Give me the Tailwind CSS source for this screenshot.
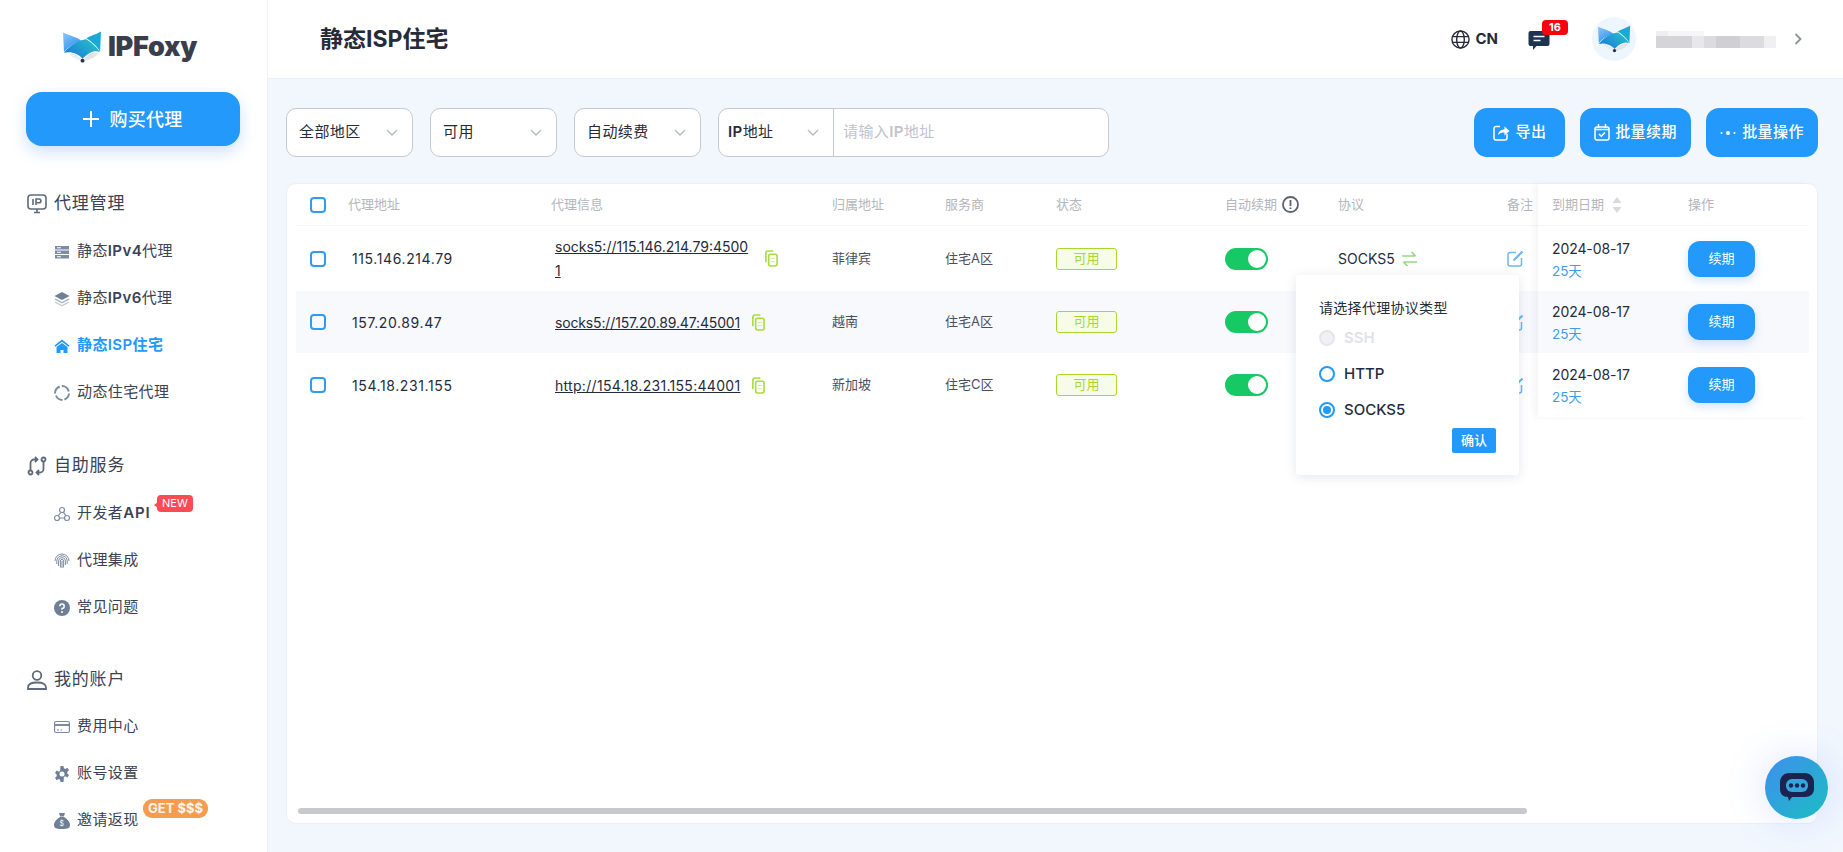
<!DOCTYPE html>
<html lang="zh-CN">
<head>
    <meta charset="UTF-8">
    <title>静态ISP住宅 - IPFoxy</title>
    <script src="https://cdn.jsdelivr.net/npm/@tailwindcss/browser@4"></script>
</head>
<body class="h-screen w-screen overflow-hidden flex bg-[#f2f7fe] text-[#262b3a] font-['Inter','Noto_Sans_CJK_SC',sans-serif]">

<svg width="0" height="0" class="absolute">
    <defs>
        <linearGradient id="earL" x1="0" y1="0" x2="0.6" y2="1"><stop offset="0" stop-color="#8cc8fb"/><stop offset="1" stop-color="#2f8fee"/></linearGradient>
        <linearGradient id="sweep" x1="0" y1="1" x2="1" y2="0.3"><stop offset="0" stop-color="#1b74dc"/><stop offset="1" stop-color="#27bcc9"/></linearGradient>
        <symbol id="logo" viewBox="0 0 40 32">
            <path d="M0 1C6 4 14 5 19 10C12 11 5 16 1 21Z" fill="url(#earL)"/>
            <path d="M39 0C34 3 28 4 24 7C30 11 36 16 38 21Z" fill="#1aa9d4"/>
            <path d="M1 22C8 13 16 9 24 8C30 12 35 17 38 21C32 19 27 21 20 28C16 23 8 20 1 22Z" fill="url(#sweep)"/>
            <path d="M21 29C26 23 32 20 37 22C34 26 28 30 21 30Z" fill="#dfe5e9"/>
            <path d="M19 29C15 24 10 22 6 23C9 26 14 29 19 30Z" fill="#e9eef2"/>
            <circle cx="20" cy="30" r="2" fill="#2b2f3f"/>
        </symbol>
        <symbol id="copy" viewBox="0 0 15 18" fill="none" stroke="#a8dc3c" stroke-width="1.700">
            <path d="M2 13V3a2 2 0 0 1 2-2h6"/>
            <rect x="5" y="4.500" width="9" height="12.500" rx="2"/>
            <path d="M7.500 9h4M7.500 12.500h4" stroke-width="1" stroke="#cde88d"/>
        </symbol>
    </defs>
</svg>

<aside class="w-[268px] shrink-0 h-full bg-white border-r border-[#edf0f5] flex flex-col">
    <div class="h-[92px] pt-[31px] pl-[63px] flex items-start gap-[6px]">
        <svg class="w-[39px] h-[32px]"><use href="#logo"/></svg>
        <span class="text-[27px] leading-[32px] font-black text-[#3a3d4c] tracking-[-0.3px]">IPFoxy</span>
    </div>
    <div class="ml-[26px] w-[214px] h-[54px] rounded-[16px] bg-[#2299fb] shadow-[0_6px_16px_rgba(34,120,251,0.22)] flex items-center justify-center gap-[10px] text-white text-[18px]">
        <svg class="w-[16px] h-[16px]" viewBox="0 0 16 16" fill="none" stroke="white" stroke-width="2"><path d="M8 0v16M0 8h16"/></svg>
        <span class="font-medium tracking-[0.3px]">购买代理</span>
    </div>

    <div class="mt-[45px] pl-[27px] flex items-center gap-[7px] h-[26px] text-[17px] tracking-[0.8px] text-[#3a4254]">
        <svg class="w-[20px] h-[20px]" viewBox="0 0 20 20" fill="none" stroke="#5f6b7c" stroke-width="1.600"><rect x="1" y="1" width="18" height="14" rx="3"/><path d="M7 18.500h6M10 15v3.500M6 5v6M9 11V5h3a1.700 1.700 0 0 1 0 3.800H9"/></svg>
        <span>代理管理</span>
    </div>
    <nav class="mt-[11px] pl-[54px] flex flex-col text-[15px] tracking-[0.4px] text-[#3a4254]">
        <div class="h-[47px] flex items-center gap-[7px]">
            <svg class="w-[16px] h-[16px]" viewBox="0 0 16 16" fill="#7d8ba0"><path d="M1 2h14v3.500H1zM1 6.500h14V10H1zM1 11h14v3.500H1z"/><path d="M3 3.200h4v1H3zM3 7.700h4v1H3zM3 12.200h4v1H3z" fill="#fff"/></svg>
            <span>静态<b class="font-semibold">IPv4</b>代理</span>
        </div>
        <div class="h-[47px] flex items-center gap-[7px]">
            <svg class="w-[16px] h-[16px]" viewBox="0 0 16 16"><path d="M8 1l7.500 4L8 9 .500 5z" fill="#6f7f95"/><path d="M1.500 7.500L8 11l6.500-3.500 1 1L8 12.500.500 8.500z" fill="#a9b4c2"/><path d="M1.500 10.500L8 14l6.500-3.500 1 1L8 15.500.500 11.500z" fill="#c4ccd6"/></svg>
            <span>静态<b class="font-semibold">IPv6</b>代理</span>
        </div>
        <div class="h-[47px] flex items-center gap-[7px] text-[#2299fb] font-semibold">
            <svg class="w-[16px] h-[16px]" viewBox="0 0 16 16" fill="#2299fb"><path d="M8 1.500L0.500 7.500l1 1.200L8 3.700l6.500 5 1-1.200z"/><path d="M2.500 9L8 5l5.500 4v6H9.500v-3h-3v3h-4z"/></svg>
            <span>静态ISP住宅</span>
        </div>
        <div class="h-[47px] flex items-center gap-[7px]">
            <svg class="w-[16px] h-[16px]" viewBox="0 0 16 16" fill="none" stroke="#7d8ba0" stroke-width="2"><path d="M5.800 1.700A7 7 0 0 0 1 8.500"/><path d="M7.800 1a7 7 0 0 1 7 5.500"/><path d="M15 8.500a7 7 0 0 1-4.600 6"/><path d="M8.500 15a7 7 0 0 1-6.500-4.500"/></svg>
            <span>动态住宅代理</span>
        </div>
    </nav>

    <div class="mt-[37px] pl-[27px] flex items-center gap-[7px] h-[26px] text-[17px] tracking-[0.8px] text-[#3a4254]">
        <svg class="w-[20px] h-[20px]" viewBox="0 0 20 20" fill="none" stroke="#5f6b7c" stroke-width="1.800"><circle cx="3.500" cy="16.500" r="2"/><circle cx="16.500" cy="3.500" r="2"/><path d="M3.500 14.500V7a3.500 3.500 0 0 1 3.500-3.500h3M8 1l2.500 2.500L8 6M16.500 5.500V13a3.500 3.500 0 0 1-3.500 3.500h-3M12 14l-2.500 2.500L12 19"/></svg>
        <span>自助服务</span>
    </div>
    <nav class="mt-[11px] pl-[54px] flex flex-col text-[15px] tracking-[0.4px] text-[#3a4254]">
        <div class="h-[47px] flex items-center gap-[7px] relative">
            <svg class="w-[16px] h-[16px]" viewBox="0 0 16 16" fill="none" stroke="#7d8ba0" stroke-width="1.200"><circle cx="8" cy="4" r="2.500"/><circle cx="3" cy="12" r="2.500"/><circle cx="13" cy="12" r="2.500"/><path d="M6.800 6.500L4 10M9.500 6.200L12 10M5.500 12h5"/></svg>
            <span>开发者<b class="font-semibold tracking-[0.8px]">API</b></span>
            <span class="absolute left-[103px] top-[5px] h-[17px] px-[5px] rounded-[4px] bg-[#fb4b55] text-white text-[11px] leading-[17px] tracking-normal">NEW</span>
            <span class="absolute left-[100px] top-[12px] w-0 h-0 border-y-[3px] border-y-transparent border-r-[4px] border-r-[#fb4b55]"></span>
        </div>
        <div class="h-[47px] flex items-center gap-[7px]">
            <svg class="w-[16px] h-[16px]" viewBox="0 0 16 16" fill="none" stroke="#7d8ba0" stroke-width="1"><path d="M1 8a7 7 0 0 1 14 0M2.800 11V8a5.200 5.200 0 0 1 10.400 0v3M4.600 13V8a3.400 3.400 0 0 1 6.800 0v4M6.400 14.500V8a1.600 1.600 0 0 1 3.200 0v6.500M8 8v7"/></svg>
            <span>代理集成</span>
        </div>
        <div class="h-[47px] flex items-center gap-[7px]">
            <svg class="w-[16px] h-[16px]" viewBox="0 0 16 16"><circle cx="8" cy="8" r="8" fill="#6f7f95"/><path d="M5.800 6.200A2.200 2.200 0 1 1 8 8.500v1.300" fill="none" stroke="#fff" stroke-width="1.500"/><circle cx="8" cy="12" r="1" fill="#fff"/></svg>
            <span>常见问题</span>
        </div>
    </nav>

    <div class="mt-[36px] pl-[27px] flex items-center gap-[7px] h-[26px] text-[17px] tracking-[0.8px] text-[#3a4254]">
        <svg class="w-[20px] h-[20px]" viewBox="0 0 20 20" fill="none" stroke="#5f6b7c" stroke-width="1.800"><circle cx="10" cy="5.500" r="4.300"/><path d="M1 19v-1.500C1 14 4 12.500 10 12.500s9 1.500 9 5V19z"/></svg>
        <span>我的账户</span>
    </div>
    <nav class="mt-[10px] pl-[54px] flex flex-col text-[15px] tracking-[0.4px] text-[#3a4254]">
        <div class="h-[47px] flex items-center gap-[7px]">
            <svg class="w-[16px] h-[16px]" viewBox="0 0 16 16" fill="none" stroke="#7d8ba0" stroke-width="1.200"><rect x="0.600" y="2.500" width="14.800" height="11" rx="1.500"/><path d="M0.600 6h14.800" stroke-width="2"/><path d="M3 11h2M6.500 11h1.500" stroke-width="1"/></svg>
            <span>费用中心</span>
        </div>
        <div class="h-[47px] flex items-center gap-[7px]">
            <svg class="w-[16px] h-[16px]" viewBox="0 0 16 16"><path d="M6.500 0h3l.4 2.200 1.500.7 2-1.100 1.600 2.500-1.700 1.500v1.600l1.700 1.500-1.600 2.500-2-1.100-1.500.7L9.500 16h-3l-.4-2.200-1.500-.7-2 1.100L1 11.700l1.700-1.500V8.600L1 7.100l1.600-2.500 2 1.100 1.500-.7z" fill="#6f7f95"/><circle cx="8" cy="8" r="2.500" fill="#fff"/></svg>
            <span>账号设置</span>
        </div>
        <div class="h-[47px] flex items-center gap-[7px] relative">
            <svg class="w-[16px] h-[16px]" viewBox="0 0 16 16"><path d="M5 0h6L9.800 3.500H6.200z" fill="#6f7f95"/><path d="M6 4h4c3 1.500 6 5 6 8 0 3-2 4-8 4s-8-1-8-4c0-3 3-6.500 6-8z" fill="#6f7f95"/><text x="8" y="13" font-size="7" fill="#fff" text-anchor="middle">$</text></svg>
            <span>邀请返现</span>
            <span class="absolute left-[89px] top-[2px] h-[19px] px-[5px] rounded-[9px] bg-[#f59c4e] text-white/90 text-[13px] font-bold leading-[19px] tracking-normal">GET $$$</span>
        </div>
    </nav>
</aside>

<main class="flex-1 min-w-0 h-full flex flex-col relative">
    <header class="h-[79px] shrink-0 bg-white border-b border-[#eaeef5] pl-[52px] flex items-center">
        <h1 class="text-[23px] font-bold text-[#262b3a]">静态ISP住宅</h1>
        <div class="ml-auto flex items-center">
            <svg class="w-[19px] h-[19px]" viewBox="0 0 20 20" fill="none" stroke="#262b3a" stroke-width="1.500"><circle cx="10" cy="10" r="9"/><ellipse cx="10" cy="10" rx="4" ry="9"/><path d="M1.500 7h17M1.500 13h17"/></svg>
            <span class="ml-[5px] text-[15px] font-bold">CN</span>
            <div class="ml-[30px] relative w-[21px] h-[21px]">
                <svg class="w-[22px] h-[19px] mt-[2px]" viewBox="0 0 21 19"><path d="M2 0h17a2 2 0 0 1 2 2v11a2 2 0 0 1-2 2H8l-3.500 4v-4H2a2 2 0 0 1-2-2V2a2 2 0 0 1 2-2z" fill="#1d3350"/><path d="M5 5.500h11M5 9.500h7" stroke="#fff" stroke-width="1.500"/></svg>
                <span class="absolute left-[14px] top-[-9px] w-[26px] h-[15px] rounded-[4px] bg-[#f5050f] text-white text-[11px] font-bold leading-[15px] text-center">16</span>
            </div>
            <div class="ml-[43px] w-[44px] h-[44px] rounded-full bg-[#edf5fd] flex items-center justify-center">
                <svg class="w-[33px] h-[28px]"><use href="#logo"/></svg>
            </div>
            <div class="ml-[20px] w-[120px] flex flex-col gap-0">
                <div class="flex h-[5px]"><i class="w-[12px] bg-[#eeeef1]"></i><i class="w-[36px] bg-[#f6f6f8]"></i></div>
                <div class="flex h-[12px]">
                    <i class="w-[36px] bg-[#d4d4d9]"></i><i class="w-[12px] bg-[#e8e8eb]"></i><i class="w-[12px] bg-[#dcdce0]"></i><i class="w-[24px] bg-[#cfcfd4]"></i><i class="w-[24px] bg-[#dcdce0]"></i><i class="w-[12px] bg-[#f0f0f2]"></i>
                </div>
            </div>
            <svg class="ml-[18px] mr-[41px] w-[8px] h-[12px]" viewBox="0 0 8 12" fill="none" stroke="#8d929b" stroke-width="1.800"><path d="M1.500 1l5 5-5 5"/></svg>
        </div>
    </header>

    <section class="flex-1 min-h-0 pt-[29px] pl-[18px] pr-[25px] pb-[28px] flex flex-col">
        <div class="h-[49px] shrink-0 flex items-stretch text-[15px] tracking-[0.4px]">
            <div class="w-[127px] rounded-[10px] border border-[#c5c9d2] bg-white pl-[12px] pr-[14px] flex items-center justify-between">
                <span>全部地区</span>
                <svg class="w-[12px] h-[7px]" viewBox="0 0 12 7" fill="none" stroke="#b4b8c0" stroke-width="1.300"><path d="M1 1l5 5 5-5"/></svg>
            </div>
            <div class="ml-[17px] w-[127px] rounded-[10px] border border-[#c5c9d2] bg-white pl-[12px] pr-[14px] flex items-center justify-between">
                <span>可用</span>
                <svg class="w-[12px] h-[7px]" viewBox="0 0 12 7" fill="none" stroke="#b4b8c0" stroke-width="1.300"><path d="M1 1l5 5 5-5"/></svg>
            </div>
            <div class="ml-[17px] w-[127px] rounded-[10px] border border-[#c5c9d2] bg-white pl-[12px] pr-[14px] flex items-center justify-between">
                <span>自动续费</span>
                <svg class="w-[12px] h-[7px]" viewBox="0 0 12 7" fill="none" stroke="#b4b8c0" stroke-width="1.300"><path d="M1 1l5 5 5-5"/></svg>
            </div>
            <div class="ml-[17px] w-[391px] rounded-[10px] border border-[#c5c9d2] bg-white flex items-stretch">
                <div class="w-[115px] border-r border-[#c5c9d2] pl-[9px] pr-[14px] flex items-center justify-between">
                    <span><b class="font-semibold">IP</b>地址</span>
                    <svg class="w-[12px] h-[7px]" viewBox="0 0 12 7" fill="none" stroke="#b4b8c0" stroke-width="1.300"><path d="M1 1l5 5 5-5"/></svg>
                </div>
                <div class="pl-[9px] flex items-center text-[#bfc3cb]">请输入<b class="font-semibold">IP</b>地址</div>
            </div>

            <div class="ml-auto flex gap-[15px] text-white text-[15px] font-medium">
                <div class="w-[91px] rounded-[13px] bg-[#2299fb] flex items-center justify-center gap-[6px]">
                    <svg class="w-[17px] h-[17px]" viewBox="0 0 17 17" fill="none" stroke="#fff" stroke-width="1.500"><path d="M7 2.500H3A2 2 0 0 0 1 4.500v9.500a2 2 0 0 0 2 2h9a2 2 0 0 0 2-2V10"/><path d="M5 11c.5-3.500 3-5.500 6.500-5.500V2.500L16.500 7l-5 4.500V8.500C9 8.500 6.500 9 5 11z" fill="#fff" stroke="none"/></svg>
                    <span>导出</span>
                </div>
                <div class="w-[111px] rounded-[13px] bg-[#2299fb] flex items-center justify-center gap-[5px]">
                    <svg class="w-[16px] h-[17px]" viewBox="0 0 16 17" fill="none" stroke="#fff" stroke-width="1.500"><rect x="1" y="3" width="14" height="13" rx="2"/><path d="M4.500 0v4M11.500 0v4M1 5.500h14" /><path d="M5 10l2.300 2.300L11 8.500"/></svg>
                    <span>批量续期</span>
                </div>
                <div class="w-[112px] rounded-[13px] bg-[#2299fb] flex items-center justify-center gap-[6px]">
                    <svg class="w-[16px] h-[4px]" viewBox="0 0 16 4" fill="#fff"><circle cx="1.500" cy="2" r="1"/><circle cx="8" cy="2" r="2"/><circle cx="14.500" cy="2" r="1"/></svg>
                    <span>批量操作</span>
                </div>
            </div>
        </div>

        <div class="mt-[26px] flex-1 min-h-0 bg-white rounded-[10px] border border-[#edf0f6] relative flex flex-col pl-[9px] pr-[8px]">
            <div class="flex-1 min-h-0 flex items-start">
                <!-- 스크롤 영역 -->
                <div class="flex-1 min-w-0 text-[13px] text-[#4a4f5c]">
                    <div class="h-[42px] flex items-center border-b border-[#f5f6f9] text-[#b3b6bd]">
                        <div class="w-[52px] pl-[14px]"><span class="block w-[16px] h-[16px] rounded-[4px] border-2 border-[#2f9bf5]"></span></div>
                        <div class="w-[203px]">代理地址</div>
                        <div class="w-[281px]">代理信息</div>
                        <div class="w-[113px]">归属地址</div>
                        <div class="w-[111px]">服务商</div>
                        <div class="w-[169px]">状态</div>
                        <div class="w-[113px] flex items-center gap-[5px]">自动续期
                            <svg class="w-[17px] h-[17px]" viewBox="0 0 17 17" fill="none" stroke="#5c6069" stroke-width="1.800"><circle cx="8.500" cy="8.500" r="7.500"/><path d="M8.500 4v6M8.500 11.500v1.500"/></svg>
                        </div>
                        <div class="w-[169px]">协议</div>
                        <div class="w-[30px]">备注</div>
                    </div>

                    <div class="h-[65px] flex items-center">
                        <div class="w-[52px] pl-[14px]"><span class="block w-[16px] h-[16px] rounded-[4px] border-2 border-[#2f9bf5]"></span></div>
                        <div class="w-[203px] pl-[4px] text-[14px] text-[#262b3a] tracking-[0.6px]">115.146.214.79</div>
                        <div class="w-[281px] pl-[4px] flex items-center gap-[14px] text-[14px] text-[#262b3a]"><span class="w-[195px] break-all underline leading-[24px]">socks5://115.146.214.79:45001</span><svg class="w-[14px] h-[17px]"><use href="#copy"/></svg></div>
                        <div class="w-[113px]">菲律宾</div>
                        <div class="w-[111px]">住宅A区</div>
                        <div class="w-[169px]"><span class="w-[61px] h-[22px] rounded-[3px] border border-[#a6d92f] bg-[#f6fce8] text-[#a6d92f] flex items-center justify-center">可用</span></div>
                        <div class="w-[113px]"><span class="w-[43px] h-[22px] rounded-full bg-[#16c964] flex items-center justify-end pr-[2px]"><i class="w-[18px] h-[18px] rounded-full bg-white"></i></span></div>
                        <div class="w-[169px] flex items-center gap-[7px] text-[14px] text-[#262b3a]">SOCKS5
                            <svg class="w-[15px] h-[16px]" viewBox="0 0 15 16" fill="none" stroke="#9bd58b" stroke-width="1.700"><path d="M0 5h13.500M9.500 1l4 4M15 11H1.500M5.500 15l-4-4"/></svg>
                        </div>
                        <div class="w-[30px]"><svg class="w-[17px] h-[17px]" viewBox="0 0 17 17" fill="none" stroke="#6cb8f0" stroke-width="1.500"><path d="M9 2.500H3A2 2 0 0 0 1 4.500v9.500a2 2 0 0 0 2 2h9.500a2 2 0 0 0 2-2V8"/><path d="M6.500 10.500L15.500 1.500" stroke-width="2.200"/></svg></div>
                    </div>

                    <div class="h-[62px] flex items-center bg-[#f8f9fd]">
                        <div class="w-[52px] pl-[14px]"><span class="block w-[16px] h-[16px] rounded-[4px] border-2 border-[#2f9bf5]"></span></div>
                        <div class="w-[203px] pl-[4px] text-[14px] text-[#262b3a] tracking-[0.6px]">157.20.89.47</div>
                        <div class="w-[281px] pl-[4px] flex items-center gap-[11px] text-[14px] text-[#262b3a]"><span class="underline tracking-[-0.15px]">socks5://157.20.89.47:45001</span><svg class="w-[14px] h-[17px]"><use href="#copy"/></svg></div>
                        <div class="w-[113px]">越南</div>
                        <div class="w-[111px]">住宅A区</div>
                        <div class="w-[169px]"><span class="w-[61px] h-[22px] rounded-[3px] border border-[#a6d92f] bg-[#f6fce8] text-[#a6d92f] flex items-center justify-center">可用</span></div>
                        <div class="w-[113px]"><span class="w-[43px] h-[22px] rounded-full bg-[#16c964] flex items-center justify-end pr-[2px]"><i class="w-[18px] h-[18px] rounded-full bg-white"></i></span></div>
                        <div class="w-[169px]"></div>
                        <div class="w-[30px]"><svg class="w-[17px] h-[17px]" viewBox="0 0 17 17" fill="none" stroke="#6cb8f0" stroke-width="1.500"><path d="M9 2.500H3A2 2 0 0 0 1 4.500v9.500a2 2 0 0 0 2 2h9.500a2 2 0 0 0 2-2V8"/><path d="M6.500 10.500L15.500 1.500" stroke-width="2.200"/></svg></div>
                    </div>

                    <div class="h-[64px] flex items-center">
                        <div class="w-[52px] pl-[14px]"><span class="block w-[16px] h-[16px] rounded-[4px] border-2 border-[#2f9bf5]"></span></div>
                        <div class="w-[203px] pl-[4px] text-[14px] text-[#262b3a] tracking-[0.6px]">154.18.231.155</div>
                        <div class="w-[281px] pl-[4px] flex items-center gap-[11px] text-[14px] text-[#262b3a]"><span class="underline tracking-[0.3px]">http://154.18.231.155:44001</span><svg class="w-[14px] h-[17px]"><use href="#copy"/></svg></div>
                        <div class="w-[113px]">新加坡</div>
                        <div class="w-[111px]">住宅C区</div>
                        <div class="w-[169px]"><span class="w-[61px] h-[22px] rounded-[3px] border border-[#a6d92f] bg-[#f6fce8] text-[#a6d92f] flex items-center justify-center">可用</span></div>
                        <div class="w-[113px]"><span class="w-[43px] h-[22px] rounded-full bg-[#16c964] flex items-center justify-end pr-[2px]"><i class="w-[18px] h-[18px] rounded-full bg-white"></i></span></div>
                        <div class="w-[169px]"></div>
                        <div class="w-[30px]"><svg class="w-[17px] h-[17px]" viewBox="0 0 17 17" fill="none" stroke="#6cb8f0" stroke-width="1.500"><path d="M9 2.500H3A2 2 0 0 0 1 4.500v9.500a2 2 0 0 0 2 2h9.500a2 2 0 0 0 2-2V8"/><path d="M6.500 10.500L15.500 1.500" stroke-width="2.200"/></svg></div>
                    </div>
                </div>

                <!-- 고정 열 -->
                <div class="w-[271px] shrink-0 bg-white shadow-[-4px_0_6px_rgba(40,60,100,0.05)] text-[14px] text-[#262b3a]">
                    <div class="h-[42px] flex items-center border-b border-[#f5f6f9] text-[13px] text-[#b3b6bd] pl-[14px]">
                        <div class="w-[136px] flex items-center gap-[8px]">到期日期
                            <svg class="w-[10px] h-[18px]" viewBox="0 0 10 18" fill="#d8dae0"><path d="M5 1L9.500 7H.500zM5 17L.500 11h9z"/></svg>
                        </div>
                        <div>操作</div>
                    </div>
                    <div class="h-[65px] flex items-center pl-[14px]">
                        <div class="w-[136px] pt-[2px] leading-[23px] tracking-[-0.1px]"><div>2024-08-17</div><div class="text-[13.500px] text-[#3d9cf0]">25天</div></div>
                        <div class="w-[67px] h-[36px] rounded-[12px] bg-[#2299fb] shadow-[0_4px_10px_rgba(34,120,251,0.2)] text-white text-[13px] flex items-center justify-center">续期</div>
                    </div>
                    <div class="h-[62px] flex items-center pl-[14px] bg-[#f8f9fd]">
                        <div class="w-[136px] pt-[2px] leading-[23px] tracking-[-0.1px]"><div>2024-08-17</div><div class="text-[13.500px] text-[#3d9cf0]">25天</div></div>
                        <div class="w-[67px] h-[36px] rounded-[12px] bg-[#2299fb] shadow-[0_4px_10px_rgba(34,120,251,0.2)] text-white text-[13px] flex items-center justify-center">续期</div>
                    </div>
                    <div class="h-[64px] flex items-center pl-[14px]">
                        <div class="w-[136px] pt-[2px] leading-[23px] tracking-[-0.1px]"><div>2024-08-17</div><div class="text-[13.500px] text-[#3d9cf0]">25天</div></div>
                        <div class="w-[67px] h-[36px] rounded-[12px] bg-[#2299fb] shadow-[0_4px_10px_rgba(34,120,251,0.2)] text-white text-[13px] flex items-center justify-center">续期</div>
                    </div>
                </div>
            </div>
            <div class="shrink-0 h-[6px] mb-[9px] ml-[2px] w-[1229px] rounded-full bg-[#c8c9ce]"></div>

            <!-- 협의 팝오버 -->
            <div class="absolute left-[1009px] top-[91px] w-[223px] h-[200px] bg-white rounded-[3px] shadow-[0_2px_12px_rgba(40,60,100,0.12)] px-[23px] pt-[23px] text-[#262b3a]">
                <p class="text-[14px] leading-[20px] tracking-[0.3px]">请选择代理协议类型</p>
                <div class="mt-[10px] h-[20px] flex items-center gap-[9px] text-[15px] font-semibold text-[#dfe2e8]"><span class="w-[16px] h-[16px] rounded-full border-2 border-[#e4e6ec] bg-[#f0f1f5]"></span>SSH</div>
                <div class="mt-[16px] h-[20px] flex items-center gap-[9px] text-[15px] font-medium"><span class="w-[16px] h-[16px] rounded-full border-2 border-[#2299fb]"></span>HTTP</div>
                <div class="mt-[16px] h-[20px] flex items-center gap-[9px] text-[15px] font-medium"><span class="w-[16px] h-[16px] rounded-full border-2 border-[#2299fb] flex items-center justify-center"><i class="w-[8px] h-[8px] rounded-full bg-[#2299fb]"></i></span>SOCKS5</div>
                <div class="absolute right-[23px] bottom-[22px] w-[44px] h-[25px] rounded-[2px] bg-[#2299fb] text-white text-[13px] font-medium flex items-center justify-center">确认</div>
            </div>
        </div>
    </section>

    <!-- 채팅 버튼 -->
    <div class="absolute left-[1497px] top-[756px] w-[63px] h-[63px] rounded-full bg-[linear-gradient(135deg,#3f8fee,#1bbdc2)] shadow-[0_0_40px_rgba(90,130,250,0.22)] flex items-center justify-center">
        <svg class="w-[38px] h-[34px]" viewBox="0 0 38 34"><path d="M11 2h16c5 0 9 4 9 9v7c0 5-4 8-9 8H14l-3 4-1-4c-5 0-8-3-8-8v-7c0-5 4-9 9-9z" fill="#1b2450"/><rect x="8" y="8" width="22" height="13" rx="6" fill="#35a6dc"/><circle cx="13" cy="14.500" r="2.200" fill="#1b2450"/><circle cx="19" cy="14.500" r="2.200" fill="#1b2450"/><circle cx="25" cy="14.500" r="2.200" fill="#1b2450"/></svg>
    </div>
</main>
</body>
</html>
